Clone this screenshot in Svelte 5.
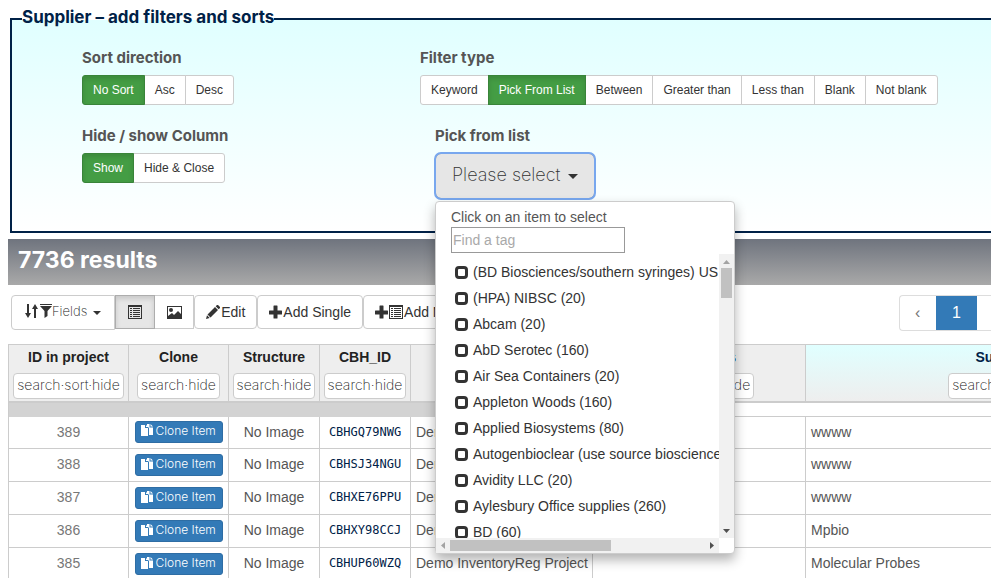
<script>
  const sortOptions = ['No Sort', 'Asc', 'Desc'];
  const filterTypes = ['Keyword', 'Pick From List', 'Between', 'Greater than', 'Less than', 'Blank', 'Not blank'];
  const visibility = ['Show', 'Hide & Close'];
  let sort = $state('No Sort');
  let filter = $state('Pick From List');
  let shown = $state('Show');

  const tags = [
    '(BD Biosciences/southern syringes) US (20)',
    '(HPA) NIBSC (20)',
    'Abcam (20)',
    'AbD Serotec (160)',
    'Air Sea Containers (20)',
    'Appleton Woods (160)',
    'Applied Biosystems (80)',
    'Autogenbioclear (use source bioscience) (20)',
    'Avidity LLC (20)',
    'Aylesbury Office supplies (260)',
    'BD (60)'
  ];

  const columns = [
    { name: 'ID in project', action: 'search·sort·hide' },
    { name: 'Clone', action: 'search·hide' },
    { name: 'Structure', action: 'search·hide' },
    { name: 'CBH_ID', action: 'search·hide' },
    { name: 'Project', action: 'search·hide' },
    { name: 'Sequences', action: 'search·sort·hide', navy: true },
    { name: 'Supplier', action: 'search·sort·hide', navy: true, active: true }
  ];

  const rows = [
    { id: 389, code: 'CBHGQ79NWG', supplier: 'wwww' },
    { id: 388, code: 'CBHSJ34NGU', supplier: 'wwww' },
    { id: 387, code: 'CBHXE76PPU', supplier: 'wwww' },
    { id: 386, code: 'CBHXY98CCJ', supplier: 'Mpbio' },
    { id: 385, code: 'CBHUP60WZQ', supplier: 'Molecular Probes' }
  ];
</script>

{#snippet listIcon()}
  <svg width="14" height="14" viewBox="0 0 14 14" aria-hidden="true">
    <path fill="currentColor" fill-rule="evenodd" d="M0 0h14v14H0zM1 2v11h12V2z" />
    <path fill="currentColor" d="M2 3h2v1H2zM5 3h7v1H5zM2 5h2v1H2zM5 5h7v1H5zM2 7h2v1H2zM5 7h7v1H5zM2 9h2v1H2zM5 9h7v1H5zM2 11h2v1H2zM5 11h7v1H5z" />
  </svg>
{/snippet}

{#snippet plusIcon()}
  <svg width="13" height="14" viewBox="0 0 13 14" aria-hidden="true">
    <path fill="currentColor" d="M5 .5h3q.5 0 .5.5v4.500h4q.5 0 .5.5v3q0 .5-.5.5h-4V13q0 .5-.5.5H5q-.5 0-.5-.5V9.500h-4Q0 9.500 0 9V6q0-.5.5-.5h4V1Q4.500.5 5 .5z" />
  </svg>
{/snippet}

<div class="page">
  <fieldset class="filters">
    <legend>Supplier – add filters and sorts</legend>
    <div class="grid">
      <div>
        <h4>Sort direction</h4>
        <div class="group">
          {#each sortOptions as o}
            <button class:on={sort === o} onclick={() => (sort = o)}>{o}</button>
          {/each}
        </div>
      </div>
      <div>
        <h4>Filter type</h4>
        <div class="group">
          {#each filterTypes as o}
            <button class:on={filter === o} onclick={() => (filter = o)}>{o}</button>
          {/each}
        </div>
      </div>
      <div>
        <h4>Hide / show Column</h4>
        <div class="group">
          {#each visibility as o}
            <button class:on={shown === o} onclick={() => (shown = o)}>{o}</button>
          {/each}
        </div>
      </div>
      <div class="picker">
        <h4>Pick from list</h4>
        <div class="dropdown">
          <button class="toggle">Please select <span class="caret"></span></button>
          <div class="menu">
            <div class="find">
              <label for="tag">Click on an item to select</label>
              <input id="tag" type="text" placeholder="Find a tag" />
            </div>
            <div class="scroller">
              <div class="items">
                {#each tags as t}
                  <label class="item"><input type="checkbox" />{t}</label>
                {/each}
              </div>
              <div class="vbar">
                <svg width="15" height="14" viewBox="0 0 15 14"><path fill="#a3a3a3" d="M4 10h7L7.500 6z" /></svg>
                <div class="vthumb"></div>
                <svg class="end" width="15" height="15" viewBox="0 0 15 15"><path fill="#505050" d="M4 6h7l-3.500 4z" /></svg>
              </div>
              <div class="hbar">
                <svg width="14" height="15" viewBox="0 0 14 15"><path fill="#a3a3a3" d="M9 4v7L5 7.500z" /></svg>
                <div class="hthumb"></div>
                <svg class="end" width="15" height="15" viewBox="0 0 15 15"><path fill="#505050" d="M6 4v7l4-3.500z" /></svg>
              </div>
            </div>
          </div>
        </div>
      </div>
    </div>
  </fieldset>

  <main>
    <h2>7736 results</h2>

    <div class="toolbar">
      <button class="tool fields">
        <svg width="27" height="14" viewBox="0 0 27 14" aria-hidden="true">
          <path fill="currentColor" d="M2 0h2v9h2l-3 5-3-5h2zM9 14V5H7l3-5 3 5h-2v9zM15 0h12v1H15zM15 2h12l-4.500 5v5l-3 2V7z" />
        </svg><span class="light">Fields</span><span class="caret small"></span>
      </button>
      <button class="tool square pressed" aria-label="Table view">{@render listIcon()}</button>
      <button class="tool square" aria-label="Gallery view">
        <svg width="15" height="13" viewBox="0 0 15 13" aria-hidden="true">
          <path fill="currentColor" fill-rule="evenodd" d="M0 0h15v13H0zM1 1v9l4-3 2 2 4-4 3 3V1z" />
          <circle cx="4" cy="4" r="2" fill="currentColor" />
        </svg>
      </button>
      <button class="tool first">
        <svg width="14" height="14" viewBox="0 0 14 14" aria-hidden="true">
          <path fill="currentColor" d="M11 0q.5-.4 1 0l2 2q.4.5 0 1l-1.300 1.300-3-3zM9 2l3 3-7.500 7.500-3-3zM1 10.300l2.700 2.700L0 14z" />
        </svg>Edit
      </button>
      <button class="tool first">{@render plusIcon()}Add Single</button>
      <button class="tool first">{@render plusIcon()}{@render listIcon()}Add Multiple</button>
      <nav class="pages" aria-label="Pages">
        <a class="prev" href="#prev">‹</a><a class="current" href="#1">1</a><a href="#2">2</a>
      </nav>
    </div>

    <div class="tablewrap">
      <table>
        <colgroup>
          <col class="c-id" /><col class="c-clone" /><col class="c-mid" /><col class="c-mid" /><col class="c-project" /><col class="c-seq" /><col class="c-supplier" />
        </colgroup>
        <thead>
          <tr>
            {#each columns as c}
              <th class:navy={c.navy} class:active={c.active}>
                <div>{c.name}</div>
                <button class="light">{c.action}</button>
              </th>
            {/each}
          </tr>
        </thead>
        <tbody>
          <tr class="band"><td colspan="5"></td><td colspan="2"></td></tr>
          {#each rows as r}
            <tr>
              <td class="center id">{r.id}</td>
              <td class="center">
                <button class="clone">
                  <svg width="13" height="13" viewBox="0 0 13 13" aria-hidden="true">
                    <path fill="currentColor" d="M0 1h4v3h3v8H0zM5 1l2 2H5zM6 0h2.500v3.500H12V11H8V4L6 2zM9.500 0L12 2.500H9.500z" />
                  </svg>Clone Item
                </button>
              </td>
              <td class="center">No Image</td>
              <td class="center code">{r.code}</td>
              <td>Demo InventoryReg Project</td>
              <td></td>
              <td>{r.supplier}</td>
            </tr>
          {/each}
        </tbody>
      </table>
    </div>
  </main>
</div>

<style>
  :global(body) {
    overflow: hidden;
  }
  .page {
    padding-top: 7px;
    overflow: hidden;
    background: #fff;
    color: #555;
    font: 14px/20px "Liberation Sans", Arial, sans-serif;
  }
  .page * {
    box-sizing: border-box;
  }
  button {
    font: inherit;
    color: #333;
    background: #fff;
    border: 1px solid #ccc;
    border-radius: 4px;
    margin: 0;
    cursor: pointer;
    white-space: nowrap;
  }
  svg {
    display: block;
    flex: none;
  }
  h4, legend, h2 {
    font-family: Inter, Lato, sans-serif;
    font-weight: 700;
    margin: 0;
  }
  .filters {
    min-width: 0;
    margin: 0 0 0 10px;
    border: 2px solid #002147;
    border-right: 0;
    padding: 17px 0 32px 70px;
    background: linear-gradient(#e0ffff, #fff);
  }
  legend {
    margin-left: -60px;
    padding: 0 0 4px;
    color: #002147;
    font-size: 17px;
    line-height: 20px;
  }
  .grid {
    display: grid;
    grid-template-columns: 338px 1fr;
    row-gap: 21px;
  }
  h4 {
    font-size: 15px;
    line-height: 20px;
    margin-bottom: 7px;
  }
  .group {
    display: flex;
  }
  .group button {
    font-size: 12px;
    line-height: 18px;
    padding: 5px 10px;
    border-radius: 0;
    margin-left: -1px;
  }
  .group button:first-child {
    margin-left: 0;
    border-radius: 3px 0 0 3px;
  }
  .group button:last-child {
    border-radius: 0 3px 3px 0;
  }
  .group .on {
    position: relative;
    color: #fff;
    background: #449d44;
    border-color: #398439;
    box-shadow: inset 0 3px 5px rgba(0, 0, 0, 0.125);
  }
  .picker {
    padding-left: 15px;
  }
  .dropdown {
    position: relative;
    height: 46px;
  }
  .toggle {
    display: flex;
    align-items: center;
    gap: 8px;
    height: 46px;
    padding: 0 16px 3px;
    border-color: #8c8c8c;
    border-radius: 6px;
    background: #e6e6e6;
    outline: 2px solid #78a7ee;
    outline-offset: -1px;
    font: 200 18px/24px Inter, Lato, sans-serif;
  }
  .caret {
    border: 5px solid transparent;
    border-top-color: #333;
    border-bottom: 0;
    margin-top: 4px;
  }
  .caret.small {
    border-width: 4px 4px 0;
    margin-left: 5px;
  }
  .menu {
    position: absolute;
    z-index: 5;
    top: 48px;
    left: 0;
    width: 300px;
    background: #fff;
    border: 1px solid #ccc;
    border-radius: 4px;
    box-shadow: 0 6px 12px rgba(0, 0, 0, 0.3);
  }
  .find {
    padding: 5px 15px 1px;
  }
  .find label {
    display: block;
  }
  .find input {
    display: block;
    width: 174px;
    height: 26px;
    padding: 0 1px;
    border: 1px solid #999;
    font: inherit;
  }
  .find input::placeholder {
    color: #a9a9a9;
  }
  .scroller {
    display: grid;
    grid-template-columns: 1fr 15px;
    grid-template-rows: 284px 15px;
  }
  .items {
    overflow: hidden;
    padding: 5px 0 0 19px;
  }
  .item {
    display: flex;
    align-items: center;
    gap: 5px;
    height: 26px;
    white-space: nowrap;
    color: #333;
  }
  .item input {
    appearance: none;
    flex: none;
    width: 13px;
    height: 13px;
    margin: 0;
    border: 3px solid #333;
    border-radius: 4px;
  }
  .vbar, .hbar {
    display: flex;
    background: #f1f1f1;
  }
  .vbar {
    flex-direction: column;
  }
  .vthumb {
    width: 11px;
    height: 30px;
    margin-left: 2px;
    background: #c1c1c1;
  }
  .hthumb {
    width: 161px;
    height: 11px;
    margin-top: 2px;
    background: #c1c1c1;
  }
  .vbar .end {
    margin-top: auto;
  }
  .hbar .end {
    margin-left: auto;
  }
  main {
    margin: 6px 0 0 8px;
  }
  h2 {
    height: 46px;
    padding: 0 10px;
    font-size: 23px;
    line-height: 42px;
    color: #fff;
    background: linear-gradient(#6f747e, #a9a9a9);
  }
  .toolbar {
    display: flex;
    align-items: flex-start;
    padding: 10px 0 13px 3px;
  }
  .tool {
    display: flex;
    align-items: center;
    flex: none;
    height: 34px;
    padding: 0 11px;
  }
  .light {
    font-family: Inter, Lato, sans-serif;
    font-weight: 200;
    color: #222;
  }
  .fields {
    height: 35px;
    padding: 0 13px 3px;
    border-radius: 4px 0 0 4px;
  }
  .fields .light {
    font-size: 13px;
  }
  .fields .caret {
    margin-left: 6px;
  }
  .square {
    width: 40px;
    justify-content: center;
    border-radius: 0;
    margin-left: -1px;
  }
  .pressed {
    position: relative;
    margin-left: 0;
    background: #e6e6e6;
    border-color: #adadad;
    box-shadow: inset 0 3px 5px rgba(0, 0, 0, 0.125);
  }
  .first {
    gap: 1px;
  }
  .pages {
    display: flex;
    flex: none;
    width: 92px;
    height: 36px;
    margin-left: auto;
    overflow: hidden;
    border: 1px solid #ddd;
    border-right: 0;
    border-radius: 4px 0 0 4px;
  }
  .pages a {
    flex: none;
    padding: 0 16px;
    font-size: 16px;
    line-height: 34px;
    color: #777;
    text-decoration: none;
  }
  .pages .prev {
    width: 36px;
    padding: 0 15px;
  }
  .pages .current {
    width: 41px;
    margin: -1px 0;
    line-height: 36px;
    color: #fff;
    background: #337ab7;
  }
  .tablewrap {
    overflow: hidden;
  }
  table {
    width: 1194px;
    table-layout: fixed;
    border-collapse: separate;
    border-spacing: 0;
    border-left: 1px solid #ccc;
  }
  .c-id { width: 120px; }
  .c-clone { width: 100px; }
  .c-mid { width: 91px; }
  .c-project { width: 182px; }
  .c-seq { width: 213px; }
  .c-supplier { width: 396px; }
  th {
    height: 59px;
    padding: 2px 0 0;
    vertical-align: top;
    color: #222;
    background: #eee;
    border: 1px solid #ccc;
    border-width: 1px 1px 2px 0;
  }
  th.navy {
    color: #002147;
  }
  th.active {
    background: linear-gradient(#e0ffff, #eee);
  }
  th button {
    height: 26px;
    margin-top: 6px;
    padding: 0 3px 2px;
    font-size: 14px;
    line-height: 20px;
  }
  td {
    height: 33px;
    padding: 0 5px 2px;
    border: 1px solid #ccc;
    border-width: 0 1px 1px 0;
    white-space: nowrap;
  }
  .band td {
    height: 14px;
    border-right: 0;
  }
  .band td:first-child {
    background: #d3d3d3;
    border-color: #d3d3d3;
  }
  .band + tr td {
    height: 32px;
  }
  .center {
    text-align: center;
  }
  .id {
    color: #777;
  }
  .code {
    font: 12px/20px "DejaVu Sans Mono", monospace;
    color: #002147;
  }
  .clone {
    display: flex;
    align-items: center;
    gap: 2px;
    width: 88px;
    height: 22px;
    margin: 2px auto 0;
    padding: 0 5px 2px;
    font: 300 12px/18px Inter, Lato, sans-serif;
    color: #fff;
    background: #337ab7;
    border-color: #2e6da4;
    border-radius: 3px;
  }
  .band + tr .clone {
    margin-top: 0;
  }
</style>
